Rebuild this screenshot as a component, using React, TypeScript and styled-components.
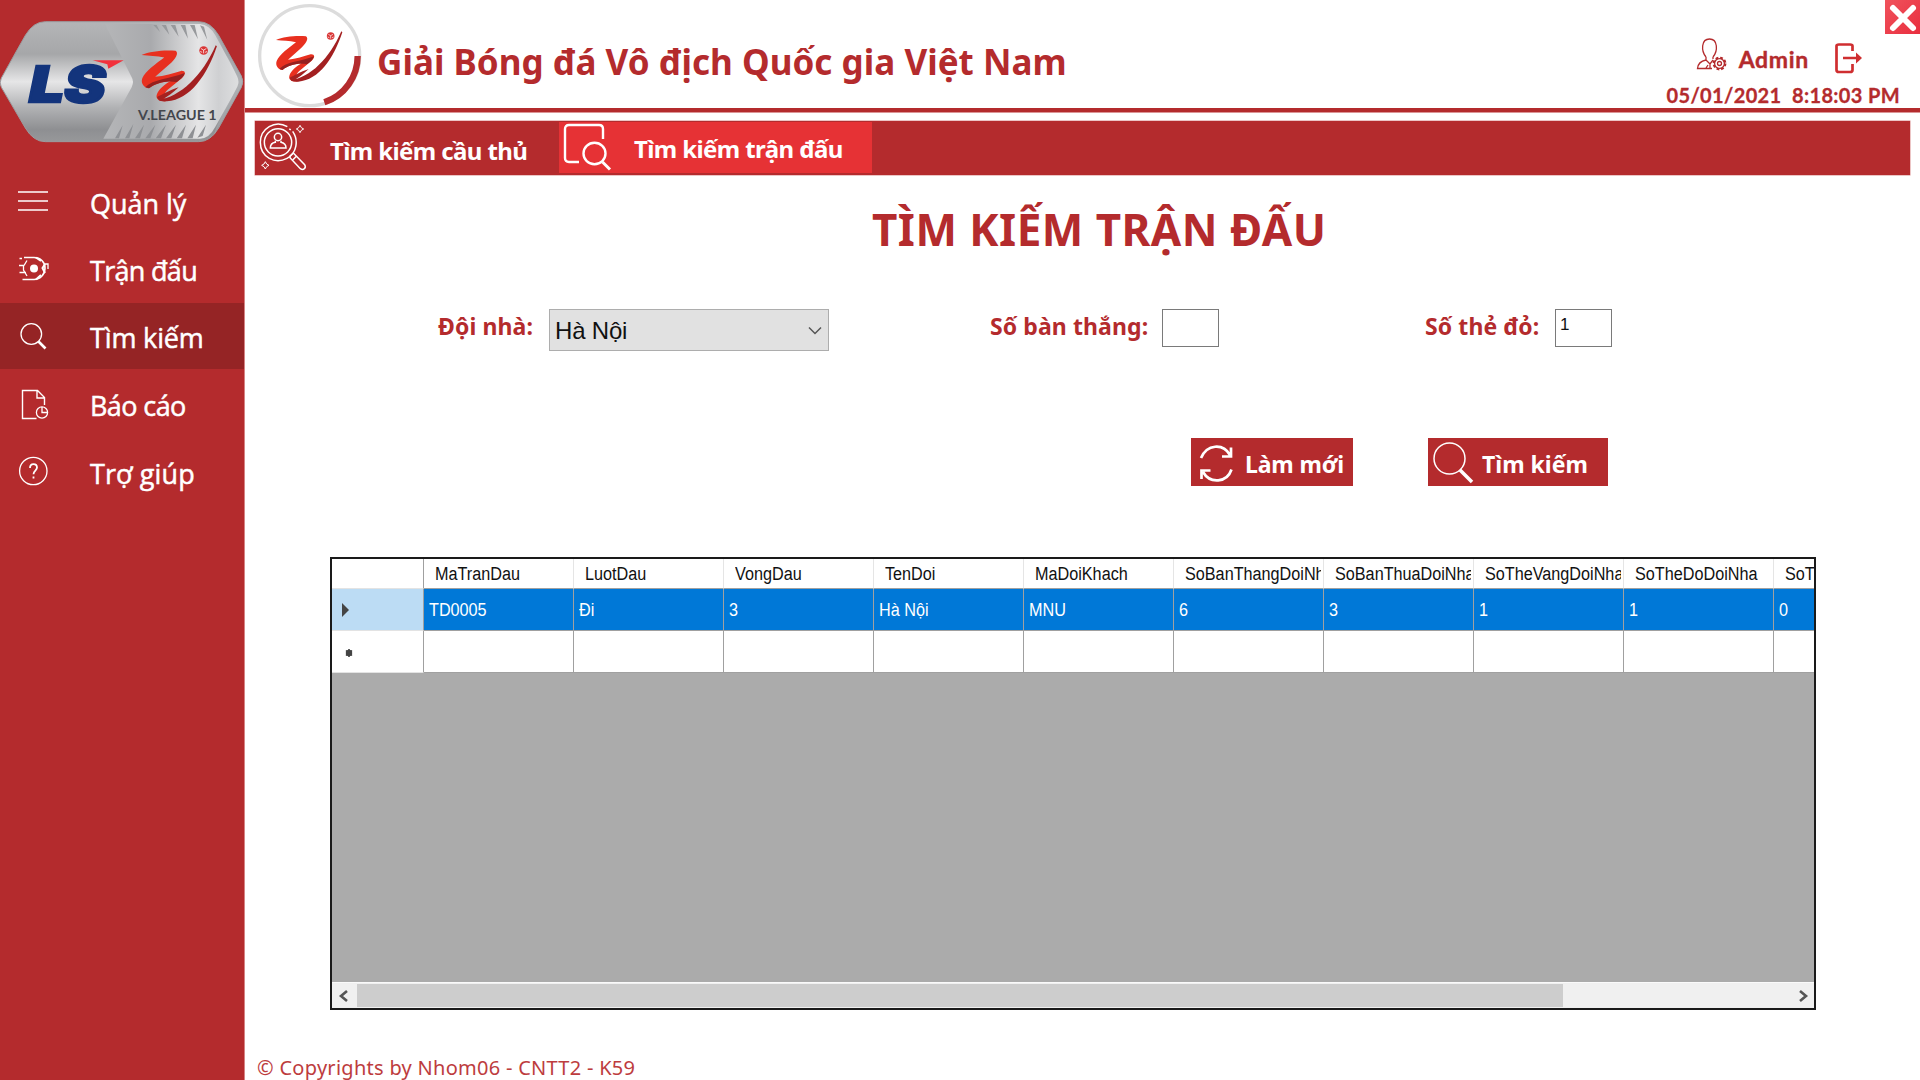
import React from 'react';
import styled, { createGlobalStyle, css } from 'styled-components';

const RED = '#b42b2d';
const ui = '"Noto Sans", "Open Sans", sans-serif';
const gridFont = '"Liberation Sans", Arial, sans-serif';

const GlobalStyle = createGlobalStyle`
  * { box-sizing: border-box; }
  body { margin: 0; background: #fff; font-family: ${ui}; }
  svg { display: block; flex: none; }
`;

const Window = styled.div`
  display: flex;
  width: 1920px;
  height: 1080px;
  overflow: hidden;
  background: #fff;
`;

const Sidebar = styled.aside`
  width: 245px;
  flex: none;
  background: ${RED};
  border-right: 1px solid #d68485;
`;

const BadgeArea = styled.div`
  height: 168px;
  padding-top: 20px;
`;

const NavItem = styled.div<{ $active?: boolean }>`
  display: flex;
  align-items: center;
  height: 67.5px;
  padding: 1px 0 0 14px;
  background: ${p => (p.$active ? '#952425' : 'transparent')};
  ${p => p.$active && css`
    height: 66px;
    margin-bottom: 1.5px;
  `}
`;

const NavLabel = styled.span<{ $spacing: number }>`
  margin-left: 36px;
  padding-top: 3px;
  font: 500 27px/36px "Open Sans", ${ui};
  letter-spacing: ${p => p.$spacing}px;
  -webkit-text-stroke: 0.5px #fff;
  color: #fff;
  white-space: nowrap;
`;

const Main = styled.main`
  flex: 1;
  min-width: 0;
  display: flex;
  flex-direction: column;
`;

const Header = styled.header`
  display: flex;
  height: 112px;
  flex: none;
  border-bottom: 4px solid ${RED};
  box-shadow: 0 1px 0 #dc9596;
`;

const LogoSlot = styled.div`
  padding: 3px 0 0 10px;
  width: 132px;
`;

const AppTitle = styled.h1`
  margin: 38px 0 0;
  font: 700 35px/48px ${ui};
  letter-spacing: 0.04px;
  color: ${RED};
  white-space: nowrap;
`;

const HeaderRight = styled.div`
  flex: 1;
  display: flex;
  flex-direction: column;
  align-items: flex-end;
`;

const CloseButton = styled.div`
  width: 35px;
  height: 34px;
  background: linear-gradient(135deg, #f0525c, #e92f3f);
`;

const UserRow = styled.div`
  display: flex;
  align-items: flex-start;
  height: 45px;
  padding: 3px 57px 0 0;
`;

const UserName = styled.span`
  margin: 6px 25px 0 11px;
  font: 700 23px/32px Lato, ${ui};
  letter-spacing: 0.7px;
  -webkit-text-stroke: 0.4px ${RED};
  color: ${RED};
`;

const ExitSlot = styled.div`
  padding-top: 1px;
`;

const Clock = styled.div`
  padding-right: 20px;
  font: 700 20px/26px Lato, ${ui};
  letter-spacing: 0.36px;
  margin-top: 5px;
  -webkit-text-stroke: 0.3px ${RED};
  color: ${RED};
  white-space: pre;
`;

const TabBar = styled.nav`
  display: flex;
  height: 54px;
  flex: none;
  margin: 9px 10px 0 10px;
  background: ${RED};
  box-shadow: 0 0 0 0.5px #d98b8c;
`;

const Tab = styled.div<{ $active?: boolean; $width: number }>`
  display: flex;
  width: ${p => p.$width}px;
  height: ${p => (p.$active ? 51 : 54)}px;
  margin-top: 1px;
  padding-left: ${p => (p.$active ? 4 : 3)}px;
  background: ${p => (p.$active ? '#e63235' : 'transparent')};
`;

const TabLabel = styled.span<{ $left: number; $top: number }>`
  margin: ${p => p.$top}px 0 0 ${p => p.$left}px;
  font: 700 24px/34px ${ui};
  letter-spacing: -0.6px;
  color: #fff;
  white-space: nowrap;
`;

const PageTitle = styled.h2`
  margin: 24px 0 0 627px;
  font: 700 44px/60px ${ui};
  letter-spacing: 0.48px;
  color: ${RED};
`;

const FormRow = styled.div`
  display: flex;
  height: 42px;
  margin: 50px 0 0 192px;
`;

const Field = styled.div<{ $gap?: number }>`
  display: flex;
  align-items: flex-start;
  margin-left: ${p => p.$gap ?? 0}px;
`;

const FieldLabel = styled.label<{ $width: number }>`
  width: ${p => p.$width}px;
  padding: 1px 0 0 1px;
  font: 700 23px/32px ${ui};
  letter-spacing: 0.1px;
  color: ${RED};
  white-space: nowrap;
`;

const Combo = styled.div`
  display: flex;
  align-items: center;
  justify-content: space-between;
  width: 280px;
  height: 42px;
  padding: 2px 5px 0 5px;
  background: #e1e1e1;
  border: 1px solid #adadad;
  font: 400 24px/30px ${gridFont};
  letter-spacing: -0.2px;
  color: #111;
`;

const TextBox = styled.div`
  width: 57px;
  height: 38px;
  padding: 5px 0 0 4px;
  border: 1.5px solid #7a7a7a;
  background: #fff;
  font: 400 17px/20px ${gridFont};
  color: #111;
`;

const Actions = styled.div`
  display: flex;
  gap: 75px;
  margin: 87px 0 0 946px;
`;

const ActionButton = styled.div<{ $width: number }>`
  display: flex;
  width: ${p => p.$width}px;
  height: 48px;
  background: ${RED};
`;

const ActionLabel = styled.span<{ $spacing: number }>`
  padding-top: 9px;
  font: 700 23px/34px ${ui};
  letter-spacing: ${p => p.$spacing}px;
  color: #fff;
  white-space: nowrap;
`;

const DataGrid = styled.section`
  display: flex;
  flex-direction: column;
  width: 1486px;
  height: 453px;
  flex: none;
  margin: 71px 0 0 85px;
  border: 2px solid #1a1a1a;
  background: #ababab;
  overflow: hidden;
`;

const GridRow = styled.div<{ $height: number }>`
  display: flex;
  height: ${p => p.$height}px;
  flex: none;
  overflow: hidden;
`;

const RowHeader = styled.div<{ $selected?: boolean }>`
  display: flex;
  align-items: center;
  width: 92px;
  flex: none;
  padding-left: 9px;
  background: ${p => (p.$selected ? '#bcdcf4' : '#fff')};
  border-right: 1px solid #a0a0a0;
  border-bottom: 1px solid #e3e3e3;
`;

const ColumnHeader = styled.div`
  width: 150px;
  flex: none;
  padding: 3px 2px 0 11px;
  overflow: hidden;
  background: #fff;
  border-right: 1px solid #e5e5e5;
  border-bottom: 1px solid #a0a0a0;
  font: 400 18px/25px ${gridFont};
  color: #111;
`;

const Clip = styled.div`
  overflow: hidden;
`;

const Condensed = styled.span`
  display: inline-block;
  transform: scaleX(0.9);
  transform-origin: 0 50%;
  white-space: nowrap;
`;

const Cell = styled.div<{ $selected?: boolean }>`
  width: 150px;
  flex: none;
  padding: 9px 0 0 5px;
  background: ${p => (p.$selected ? '#0078d7' : '#fff')};
  border-right: 1px solid #a0a0a0;
  border-bottom: 1px solid #a0a0a0;
  font: 400 18px/25px ${gridFont};
  color: #fff;
`;

const Filler = styled.div`
  flex: 1;
`;

const ScrollBar = styled.div`
  display: flex;
  align-items: center;
  height: 26px;
  flex: none;
  background: #f0f0f0;
  border-top: 1px solid #fafafa;
`;

const Thumb = styled.div`
  width: 1206px;
  height: 23px;
  background: #cdcdcd;
`;

const ScrollArrow = styled.div<{ $end?: boolean }>`
  display: flex;
  align-items: center;
  width: 25px;
  padding-left: 5px;
  ${p => p.$end && css`
    margin-left: auto;
    padding-left: 8px;
  `}
`;

const Footer = styled.footer`
  margin: 46px 0 0 12px;
  font: 400 20px/24px ${ui};
  letter-spacing: 0.28px;
  color: #bd3c3e;
`;

const Emblem = () => (
  <>
    <path d="M828 119C850 109 890 105 918 108C927 114 919 130 901 145L864 178C888 176 912 168 932 162C945 161 946 171 935 181L897 213C885 224 886 236 894 243C877 246 865 239 868 227C872 212 889 198 905 189C885 191 861 197 847 209C835 208 825 196 830 182C838 163 868 141 888 126C868 121 848 121 828 119Z" fill="#e8301f" />
    <path d="M838 206C858 184 902 184 942 168C940 178 930 186 921 192C893 187 864 195 848 209Z" fill="#96201f" />
    <path d="M872 240C930 232 988 176 1024 93L1027 96C1002 172 957 240 895 244C885 245 876 243 872 240Z" fill="#a32021" />
    <path d="M869 232C882 226 900 215 926 206C912 220 896 232 879 241C874 240 870 237 869 232Z" fill="#a52220" />
    <circle cx="992" cy="107" r="11.5" fill="#d93535" />
    <path d="M985 102L992 106L999 102M992 106V115M983 110L988 112M1001 110L996 112" stroke="#fff" strokeWidth="2" fill="none" />
  </>
);

const RingLogo = () => (
  <svg width="110" height="106" viewBox="765 8 330 318">
    <circle cx="929" cy="166" r="150" fill="none" stroke="#dcdcdc" strokeWidth="10" />
    <path d="M1073 167C1073 229 1034 286 973 306" fill="none" stroke={RED} strokeWidth="19" />
    <Emblem />
  </svg>
);

const LeagueBadge = () => (
  <svg width="244" height="124" viewBox="0 60 732 372">
    <defs>
      <linearGradient id="silver" x1="0" y1="0" x2="0" y2="1">
        <stop offset="0" stopColor="#b4b5b7" />
        <stop offset="0.27" stopColor="#a6a7a9" />
        <stop offset="0.5" stopColor="#e6e6e7" />
        <stop offset="0.72" stopColor="#b0b1b3" />
        <stop offset="0.9" stopColor="#8e8f92" />
        <stop offset="1" stopColor="#97989a" />
      </linearGradient>
      <linearGradient id="sheen" x1="0" y1="0" x2="1" y2="0">
        <stop offset="0" stopColor="#b5b6b8" />
        <stop offset="0.35" stopColor="#a9aaad" />
        <stop offset="0.7" stopColor="#e5e5e6" />
        <stop offset="0.85" stopColor="#cfd0d2" />
        <stop offset="1" stopColor="#dedfe0" />
      </linearGradient>
    </defs>
    <path d="M4 234L76 106Q100 65 136 65H596Q632 65 656 106L724 228Q732 245 724 262L656 384Q632 425 596 425H136Q100 425 76 384L4 262Q-3 248 4 234Z" fill="url(#silver)" stroke="#9b9c9f" strokeWidth="3" />
    <path d="M315 72H600Q628 74 646 106L714 232Q720 245 714 258L646 380Q628 415 600 416H310L395 262Q403 245 395 232Z" fill="url(#sheen)" />
    <path d="M640 82L724 228Q732 245 724 262L640 408L650 380L712 260Q719 245 712 230Z" fill="#a3a5a9" opacity="0.8" />
    <path d="M345 415L368 376L357 415ZM375 415L400 372L388 415ZM405 415L432 374L420 415ZM436 415L466 374L451 415ZM467 415L498 374L483 415ZM498 415L528 374L514 415ZM530 415L558 374L546 415ZM562 415L588 374L578 415ZM592 413L618 374L608 408Z" fill="#8e9094" />
    <path d="M460 75L480 96L470 75ZM485 75L508 104L498 75ZM512 75L536 110L526 75ZM542 75L564 116L556 75ZM570 75L594 118L584 75ZM600 76L622 120L612 80Z" fill="#97999c" />
    <text x="88" y="305" fontFamily="Inter, sans-serif" fontSize="148" fontWeight="900" fontStyle="italic" fill="#13347c" stroke="#13347c" strokeWidth="7" textLength="228" lengthAdjust="spacingAndGlyphs">LS</text>
    <path d="M278 181H371L325 206L322 193Z" fill="#f2303b" />
    <g transform="translate(-516 32) scale(1.136 1.115)"><Emblem /></g>
    <text x="414" y="359" fontFamily="Lato, sans-serif" fontSize="42" fontWeight="700" fill="#43464d" textLength="236" lengthAdjust="spacingAndGlyphs">V.LEAGUE 1</text>
  </svg>
);

/* Sidebar icons share one 40×40 canvas so that labels line up. */
const NavIcon = ({ children }: { children: React.ReactNode }) => (
  <svg width="40" height="40" viewBox="0 0 40 40" fill="none" stroke="#fff" strokeWidth="1.3">{children}</svg>
);

const MenuIcon = () => (
  <NavIcon><path d="M4 10H34M4 19H34M4 28H34" strokeWidth="1.6" /></NavIcon>
);

const BallIcon = () => (
  <NavIcon>
    <path d="M10 7.5H20C26.5 7.5 31 12 31 18C31 24 26.5 29.5 20 29.5H8.5" strokeWidth="1.6" />
    <path d="M5.5 8.5H8M5 15.5H10M5.5 22.5H12M10 15.5L13 10.5M9.5 15.5V20L13 26" />
    <path d="M22 7.5L27 11M31 14L28.5 18L31 23M27 25L22 29.500" strokeWidth="2" />
    <path d="M31 14H34V19" />
    <circle cx="20" cy="18.5" r="4" fill="#fff" stroke="none" />
  </NavIcon>
);

const SearchIcon = () => (
  <NavIcon>
    <circle cx="17.3" cy="17" r="10.3" />
    <path d="M24.5 24.5L31.5 31.5" strokeWidth="2.6" />
  </NavIcon>
);

const ReportIcon = () => (
  <NavIcon>
    <path d="M22.5 33.5H8.5V5.5H23.5L30.5 12.5V20M23 5.5V13H30.5" strokeWidth="1.4" />
    <circle cx="28" cy="27.5" r="5.6" />
    <path d="M28 22V27.5H33.5" />
  </NavIcon>
);

const HelpIcon = () => (
  <NavIcon>
    <circle cx="19.3" cy="19" r="13.7" />
    <path d="M16 16C16 13.5 17.5 12.2 19.5 12.2C21.5 12.2 23 13.6 23 15.6C23 18.5 19.5 18.8 19.5 22.2M19.5 24.5V26.5" strokeWidth="1.8" />
  </NavIcon>
);

const PlayerSearchIcon = () => (
  <svg width="50" height="50" viewBox="774 374 150 150" fill="none" stroke="#fff" strokeWidth="4.5">
    <path d="M862 388C825 366 781 394 781 435C781 481 826 501 861 483C891 468 896 428 878 402" />
    <circle cx="834" cy="435" r="41" />
    <circle cx="834" cy="419" r="11" />
    <path d="M826 430V435C815 437 811 442 811 452H858C858 442 853 437 843 435V430M868 394L872 398" />
    <path d="M870 476L880 467L914 502C920 512 910 520 901 514L870 481ZM879 487L889 477" />
    <path d="M900 384L904 391L911 395L904 399L900 406L896 399L889 395L896 391ZM796 493L800 500L807 504L800 508L796 515L792 508L785 504L792 500Z" strokeWidth="3" />
  </svg>
);

const MatchSearchIcon = () => (
  <svg width="50" height="50" viewBox="0 0 50 50" fill="none" stroke="#fff" strokeWidth="2.4">
    <path d="M16 40H6Q2 40 2 36V7Q2 3 6 3H36Q40 3 40 7V17" />
    <ellipse cx="31.5" cy="31.5" rx="11" ry="10.7" />
    <path d="M39.5 40L47 47.5" strokeWidth="3" />
  </svg>
);

const UserGearIcon = () => (
  <svg width="32" height="36" viewBox="0 0 32 36" fill="none" stroke={RED} strokeWidth="1.3">
    <path d="M10 20C5 14 5 2 13.5 2C22 2 22 14 17 20M10 20V23C5 24 2 26 1.500 31.5H16M17 20V22M10 23L14 27L17 23M12 28L10 31M14 27V31" />
    <circle cx="23.5" cy="26.5" r="5.8" strokeWidth="2.2" strokeDasharray="2.7 1.85" />
    <circle cx="23.5" cy="26.5" r="4.9" />
    <circle cx="23.5" cy="26.5" r="2" />
  </svg>
);

const ExitIcon = () => (
  <svg width="29" height="36" viewBox="0 0 29 36" fill="none" stroke="#cf2e30" strokeWidth="2.7">
    <path d="M18.5 13V8Q18.5 6.5 16 6.5H5Q2.5 6.5 2.5 8V32Q2.5 34 5 34H16Q18.500 34 18.5 32V26M9 20H23" />
    <path d="M22 14.5L28 20L22 25.5Z" fill="#cf2e30" stroke="none" />
  </svg>
);

const RefreshIcon = () => (
  <svg width="54" height="48" viewBox="0 0 54 48" fill="none" stroke="#fff" strokeWidth="2.7">
    <path d="M10 20C16 6 32 5 39 17M40 9.5V18.5H31M40.500 31.5C36 45 19 46 12 34M10.5 41V32.5H19.5" />
  </svg>
);

const BigSearchIcon = () => (
  <svg width="54" height="48" viewBox="0 0 54 48" fill="none" stroke="#fff" strokeWidth="1.5">
    <circle cx="21.5" cy="20.5" r="15.5" />
    <path d="M32 32L44 44" strokeWidth="3.5" />
  </svg>
);

const nav = [
  { label: 'Quản lý', icon: <MenuIcon />, spacing: -0.05 },
  { label: 'Trận đấu', icon: <BallIcon />, spacing: -0.7 },
  { label: 'Tìm kiếm', icon: <SearchIcon />, spacing: -0.15, active: true },
  { label: 'Báo cáo', icon: <ReportIcon />, spacing: -0.6 },
  { label: 'Trợ giúp', icon: <HelpIcon />, spacing: 0.1 },
];

const columns: [string, string][] = [
  ['MaTranDau', 'TD0005'],
  ['LuotDau', 'Đi'],
  ['VongDau', '3'],
  ['TenDoi', 'Hà Nội'],
  ['MaDoiKhach', 'MNU'],
  ['SoBanThangDoiNha', '6'],
  ['SoBanThuaDoiNha', '3'],
  ['SoTheVangDoiNha', '1'],
  ['SoTheDoDoiNha', '1'],
  ['SoTheVang', '0'],
];

export default function App() {
  return (
    <Window>
      <GlobalStyle />
      <Sidebar>
        <BadgeArea><LeagueBadge /></BadgeArea>
        {nav.map(n => (
          <NavItem key={n.label} $active={n.active}>
            {n.icon}
            <NavLabel $spacing={n.spacing}>{n.label}</NavLabel>
          </NavItem>
        ))}
      </Sidebar>
      <Main>
        <Header>
          <LogoSlot><RingLogo /></LogoSlot>
          <AppTitle>Giải Bóng đá Vô địch Quốc gia Việt Nam</AppTitle>
          <HeaderRight>
            <CloseButton>
              <svg width="35" height="34" viewBox="0 0 35 34" stroke="#fff" strokeWidth="6" strokeLinecap="round">
                <path d="M8 8L28 28M28 8L8 28" />
              </svg>
            </CloseButton>
            <UserRow>
              <UserGearIcon />
              <UserName>Admin</UserName>
              <ExitSlot><ExitIcon /></ExitSlot>
            </UserRow>
            <Clock>05/01/2021  8:18:03 PM</Clock>
          </HeaderRight>
        </Header>
        <TabBar>
          <Tab $width={304}>
            <PlayerSearchIcon />
            <TabLabel $left={22} $top={12}>Tìm kiếm cầu thủ</TabLabel>
          </Tab>
          <Tab $width={313} $active>
            <MatchSearchIcon />
            <TabLabel $left={21} $top={10}>Tìm kiếm trận đấu</TabLabel>
          </Tab>
        </TabBar>
        <PageTitle>TÌM KIẾM TRẬN ĐẤU</PageTitle>
        <FormRow>
          <Field>
            <FieldLabel $width={112}>Đội nhà:</FieldLabel>
            <Combo>
              Hà Nội
              <svg width="16" height="10" viewBox="0 0 16 10" fill="none" stroke="#555" strokeWidth="1.5">
                <path d="M2 1.5L8 7.5L14 1.5" />
              </svg>
            </Combo>
          </Field>
          <Field $gap={160}>
            <FieldLabel $width={173}>Số bàn thắng:</FieldLabel>
            <TextBox />
          </Field>
          <Field $gap={205}>
            <FieldLabel $width={131}>Số thẻ đỏ:</FieldLabel>
            <TextBox>1</TextBox>
          </Field>
        </FormRow>
        <Actions>
          <ActionButton $width={162}>
            <RefreshIcon />
            <ActionLabel $spacing={-0.15}>Làm mới</ActionLabel>
          </ActionButton>
          <ActionButton $width={180}>
            <BigSearchIcon />
            <ActionLabel $spacing={0}>Tìm kiếm</ActionLabel>
          </ActionButton>
        </Actions>
        <DataGrid>
          <GridRow $height={30}>
            <RowHeader />
            {columns.map(([name]) => (
              <ColumnHeader key={name}><Clip><Condensed>{name}</Condensed></Clip></ColumnHeader>
            ))}
          </GridRow>
          <GridRow $height={42}>
            <RowHeader $selected>
              <svg width="9" height="16" viewBox="0 0 9 16"><path d="M1 1L8 8L1 15Z" fill="#444" /></svg>
            </RowHeader>
            {columns.map(([name, value]) => (
              <Cell key={name} $selected><Condensed>{value}</Condensed></Cell>
            ))}
          </GridRow>
          <GridRow $height={42}>
            <RowHeader>
              <svg width="16" height="12" viewBox="0 0 16 12" stroke="#444" strokeWidth="1.6">
                <path d="M8 3V11M5 4.5L11 9.5M11 4.5L5 9.5" />
                <circle cx="8" cy="7" r="2.4" fill="#444" />
              </svg>
            </RowHeader>
            {columns.map(([name]) => <Cell key={name} />)}
          </GridRow>
          <Filler />
          <ScrollBar>
            <ScrollArrow>
              <svg width="12" height="12" viewBox="0 0 12 12" fill="none" stroke="#555" strokeWidth="2.6"><path d="M10 1L4 6L10 11" /></svg>
            </ScrollArrow>
            <Thumb />
            <ScrollArrow $end>
              <svg width="12" height="12" viewBox="0 0 12 12" fill="none" stroke="#555" strokeWidth="2.6"><path d="M3 1L9 6L3 11" /></svg>
            </ScrollArrow>
          </ScrollBar>
        </DataGrid>
        <Footer>© Copyrights by Nhom06 - CNTT2 - K59</Footer>
      </Main>
    </Window>
  );
}
